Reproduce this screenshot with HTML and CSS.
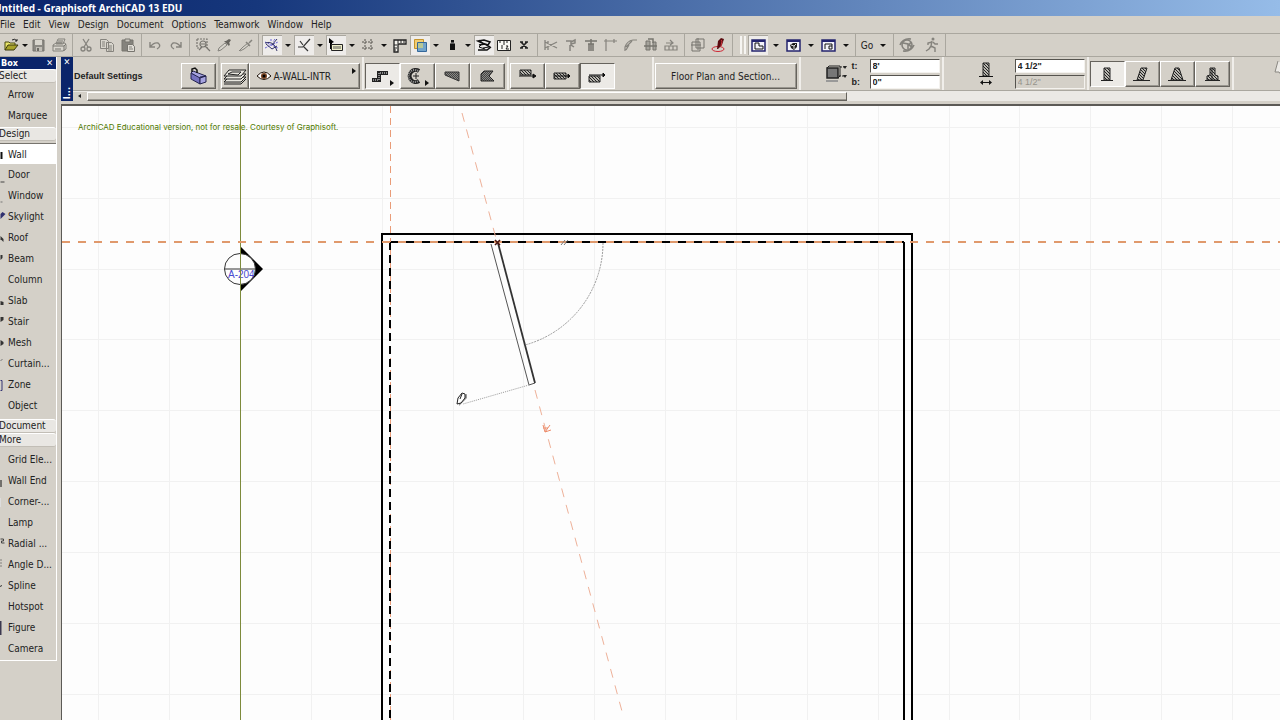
FILE: index.html
```html
<!DOCTYPE html>
<html lang="en">

<head>
    <meta charset="UTF-8">
    <meta name="viewport" content="width=device-width, initial-scale=1.0">
    <title>Untitled - Graphisoft ArchiCAD 13 EDU</title>
    <link rel="stylesheet" href="styles.css">
</head>

<body>
    <!-- shared hatch fills -->
    <svg class="defs" width="0" height="0" aria-hidden="true">
        <defs>
            <pattern id="hatch" width="3" height="3" patternUnits="userSpaceOnUse">
                <rect width="3" height="3" fill="#b8b6b0" />
                <path d="M0 0l3 3M-1 2l2 2M2-1l2 2" stroke="#222" />
            </pattern>
            <pattern id="dense" width="2" height="2" patternUnits="userSpaceOnUse">
                <rect width="2" height="2" fill="#8a8985" />
                <path d="M0 0h1v1h1v1h-1v-1h-1z" fill="#444" />
            </pattern>
        </defs>
    </svg>

    <header class="titlebar">
        <h1>Untitled - Graphisoft ArchiCAD 13 EDU</h1>
    </header>

    <nav class="menubar">
        <button>File</button>
        <button>Edit</button>
        <button>View</button>
        <button>Design</button>
        <button>Document</button>
        <button>Options</button>
        <button>Teamwork</button>
        <button>Window</button>
        <button>Help</button>
    </nav>

    <div class="toolbar">
        <div class="group">
            <button class="tool" aria-label="Open"><svg viewBox="0 0 20 18"><path d="M4 14V6h4l1 1h5v2" fill="#e8e46a" stroke="#4b4a10" /><path d="M4 14l3-5h10l-4 5z" fill="#a8a32a" stroke="#3a390c" /><path d="M11 4q3-2 5 1m0-2v2h-2" fill="none" stroke="#222" /></svg></button>
            <button class="arrow tight" aria-label="Open menu"></button>
            <button class="tool" aria-label="Save"><svg viewBox="0 0 20 18"><path d="M5 4h11v11H5z" fill="#8b8983" stroke="#77756f" /><path d="M7 4h7v5H7z" fill="#d8d5cd" /><path d="M8 11h6v4H8z" fill="#c0bdb5" /><path d="M9 12h2v3H9z" fill="#6b6963" /></svg></button>
            <button class="tool" aria-label="Print"><svg viewBox="0 0 20 18"><path d="M7 8l2-5h7l-2 5zM4 9l3-2h9l1 2v4l-3 2H4z" fill="#d8d5cd" stroke="#85837d" /><path d="M4 10h11v5M9 5h5M8 7h5M15 10l2-2M6 13h6" fill="none" stroke="#77756f" /></svg></button>
        </div>
        <div class="group">
            <button class="tool" aria-label="Cut"><svg viewBox="0 0 20 18"><g fill="none" stroke="#85837d" stroke-width="1.3"><path d="M7 3l5 8M13 3l-5 8" /><circle cx="7" cy="13" r="2" /><circle cx="13" cy="13" r="2" /></g></svg></button>
            <button class="tool" aria-label="Copy"><svg viewBox="0 0 20 18"><g fill="#d8d5cd" stroke="#85837d"><path d="M3.500 3.500h6l2 2v7h-8zM9.500 6.500h5l2 2v7h-7z" /><path d="M5 6h3M5 8h3M5 10h3M11 10h4M11 12h4M11 14h4" /></g></svg></button>
            <button class="tool" aria-label="Paste"><svg viewBox="0 0 20 18"><path d="M4 4h11v11H4z" fill="#85837d" stroke="#77756f" /><path d="M7 3h5v3H7z" fill="#c9c6be" stroke="#77756f" /><path d="M9.500 8.500h5l2 2v5h-7z" fill="#e0ddd6" stroke="#77756f" /><path d="M11 11h3M11 13h4" stroke="#85837d" /></svg></button>
        </div>
        <div class="group">
            <button class="tool" aria-label="Undo"><svg viewBox="0 0 20 18"><path d="M5 6v5h5M5 11q4-5 8-4q4 3-1 6" fill="none" stroke="#85837d" stroke-width="1.400" /></svg></button>
            <button class="tool" aria-label="Redo"><svg viewBox="0 0 20 18"><path d="M15 6v5h-5M15 11q-4-5-8-4q-4 3 1 6" fill="none" stroke="#85837d" stroke-width="1.400" /></svg></button>
        </div>
        <div class="group">
            <button class="tool" aria-label="Find and select"><svg viewBox="0 0 20 18"><g fill="none" stroke="#77756f" stroke-width="1.200"><path d="M4 3h10v9M4 3v9h4" stroke-dasharray="2 1" /><circle cx="10" cy="8" r="3" /><path d="M12 10l5 5M6 14l3-3M8 8h4" /></g></svg></button>
            <button class="tool" aria-label="Pick up parameters"><svg viewBox="0 0 20 18"><path d="M4 15l1-3 6-5 2 2-6 5z" fill="#d8d5cd" stroke="#85837d" /><path d="M10 5l5 5 1-2-1-1 2-3-2-1-3 2z" fill="#66645e" /></svg></button>
            <button class="tool" aria-label="Inject parameters"><svg viewBox="0 0 20 18"><path d="M4 15l4-4 5-4 1 2-5 4-4 2" fill="#d8d5cd" stroke="#85837d" /><path d="M11 6l4 4M14 7l3-3" stroke="#85837d" stroke-width="1.500" /></svg></button>
        </div>
        <div class="group packed">
            <button class="tool on" aria-label="Guide lines"><svg viewBox="0 0 20 18"><path d="M3 6l13 6M3 12l13-6M9 3v3M13 3l-2 3" stroke="#6a62d8" stroke-dasharray="2 1" /><path d="M3 7q9-3 12 8M10 9l5-6M4 8l6 5 5-3" fill="none" stroke="#333367" /></svg></button>
            <button class="arrow" aria-label="Guide line options"></button>
            <button class="tool on" aria-label="Snap points"><svg viewBox="0 0 20 18"><path d="M4 11h5l7-8M6 5l3 4M10 11l4 4" fill="none" stroke="#333" stroke-width="1.200" /></svg></button>
            <button class="arrow" aria-label="Snap options"></button>
            <button class="tool on" aria-label="Tracker"><svg viewBox="0 0 20 18"><path d="M3 2l5 4-2 1v6H4V7H3z" fill="#000" /><path d="M5.500 8.500h11v6h-11z" fill="#eeeec8" stroke="#222" /><path d="M8 10v3M10 10v3M12 10v3M14 10v3" stroke="#555" /></svg></button>
            <button class="arrow" aria-label="Tracker options"></button>
            <button class="tool" aria-label="Grid snap"><svg viewBox="0 0 20 18"><path d="M4 6h12M4 12h12M7 3v12M13 3v12" stroke="#55534d" stroke-dasharray="2 1" /></svg></button>
            <button class="arrow" aria-label="Grid options"></button>
            <button class="tool" aria-label="Rulers"><svg viewBox="0 0 20 18"><path d="M4 4h12v4H8v8H4z" fill="#f4f2ec" stroke="#222" stroke-width="1.300" /><path d="M8 4v3M11 4v3M14 4v3M4 9h3M4 12h3M4 14h2" stroke="#222" /></svg></button>
            <button class="tool on" aria-label="Trace reference"><svg viewBox="0 0 20 18"><path d="M4.500 3.500h9v9h-9z" fill="#f1cd72" stroke="#c5942c" /><path d="M7.500 6.500h9v9h-9z" fill="#73a4cb" stroke="#34689b" /><path d="M8 7h5v5H8z" fill="#b7c796" /></svg></button>
            <button class="arrow" aria-label="Trace options"></button>
            <button class="tool" aria-label="Pen weight"><svg viewBox="0 0 20 18"><path d="M9 4h3v3l1 1v6H8V8l1-1z" fill="#111" /><path d="M9 7h3" stroke="#aaa" /></svg></button>
            <button class="arrow" aria-label="Pen options"></button>
            <button class="tool on" aria-label="Suspend groups"><svg viewBox="0 0 20 18"><path d="M4 5l6-1 6 2-2 3-6-2zM5 9l6-1 5 3M4 14h9l4-3" fill="none" stroke="#111" stroke-width="1.500" /><path d="M5 4l5 4M8 8l-3 3 6 2M9 12l6-1" stroke="#111" fill="none" /></svg></button>
            <button class="tool" aria-label="Measure"><svg viewBox="0 0 20 18"><path d="M3.500 4.500h13v10h-13z" fill="#fafaf6" stroke="#222" /><path d="M10 4v5M6 4v3M13 4v3M8 9v4M12 10h2l-2 3h3" stroke="#222" fill="none" /></svg></button>
            <button class="tool" aria-label="Close tracking"><svg viewBox="0 0 20 18"><path d="M7 6l6 6M13 6l-6 6M6 6h3M11 6h3M6 12h3M11 12h3" stroke="#222" stroke-width="1.600" /></svg></button>
        </div>
        <div class="group packed">
            <button class="tool" aria-label="Split"><svg viewBox="0 0 20 18"><path d="M4 6l12 6M4 12l12-6M4 4v10M7 5v3M7 11v3" fill="none" stroke="#85837d" stroke-width="1.300" /></svg></button>
            <button class="tool" aria-label="Adjust"><svg viewBox="0 0 20 18"><path d="M5 5h5v4l3 2M10 6l4-2v3l-4 1M9 9v6" fill="none" stroke="#85837d" stroke-width="1.500" /></svg></button>
            <button class="tool" aria-label="Trim"><svg viewBox="0 0 20 18"><path d="M4 5h12M7 8h6M8 8v7M12 8v7M10 3v12" fill="none" stroke="#77756f" stroke-width="1.500" /></svg></button>
            <button class="tool" aria-label="Intersect"><svg viewBox="0 0 20 18"><path d="M5 15V5h11M5 3v2H3M13 3v4" fill="none" stroke="#85837d" stroke-width="1.200" /></svg></button>
            <button class="tool" aria-label="Fillet"><svg viewBox="0 0 20 18"><path d="M4 15V11q2-6 8-7h4M5 11l6-6M5 14l3-5" fill="none" stroke="#85837d" stroke-width="1.200" /></svg></button>
            <button class="tool" aria-label="Resize"><svg viewBox="0 0 20 18"><path d="M5 5h4v9H5zM12 6h3v8h-3z" fill="#a5a39c" stroke="#77756f" /><path d="M3 10h13M7 3h5v4" fill="none" stroke="#77756f" stroke-width="1.500" /></svg></button>
            <button class="tool" aria-label="Stretch"><svg viewBox="0 0 20 18"><path d="M4 10h12v4H4zM5 7h7M9 4l3 3-3 2M8 10v4M12 10v4" fill="none" stroke="#85837d" stroke-width="1.200" /></svg></button>
        </div>
        <div class="group last">
            <button class="tool" aria-label="Edit group"><svg viewBox="0 0 20 18"><path d="M4 6h8v9H4zM8 3h8v9H8zM3 9h10M10 2v12" fill="none" stroke="#77756f" /></svg></button>
            <button class="tool" aria-label="Markup"><svg viewBox="0 0 20 18"><ellipse cx="9" cy="13" rx="6" ry="2.500" fill="none" stroke="#cf2836" /><path d="M8 13l1-8 3-3 3 1-2 6-4 4z" fill="#5b0b10" /><path d="M12 4l1 1-1 5" stroke="#c6323a" fill="none" /></svg></button>
        </div>
        <div class="grip"></div>
        <div class="group views">
            <button class="tool on" aria-label="Floor plan"><svg viewBox="0 0 20 18"><path d="M4 4h13v11H4z" fill="#f3f3fa" stroke="#24246e" stroke-width="1.500" /><path d="M4 5h13" stroke="#24246e" stroke-width="2" /><path d="M7 7h4v3h4v3H7z" fill="none" stroke="#111" /></svg></button>
            <button class="arrow" aria-label="Floor plan list"></button>
            <button class="tool" aria-label="3D view"><svg viewBox="0 0 20 18"><path d="M4 4h13v11H4z" fill="#f3f3fa" stroke="#24246e" stroke-width="1.500" /><path d="M4 5h13" stroke="#24246e" stroke-width="2" /><path d="M7 9l3-2 4 0v4l-3 3-3-2z" fill="#222" /><path d="M8 9l3 1 2-2M11 10v3" stroke="#ddd" /></svg></button>
            <button class="arrow" aria-label="3D view list"></button>
            <button class="tool" aria-label="Section"><svg viewBox="0 0 20 18"><path d="M4 4h13v11H4z" fill="#f3f3fa" stroke="#24246e" stroke-width="1.500" /><path d="M4 5h13" stroke="#24246e" stroke-width="2" /><path d="M7 8h7v5h-3v-3h3M7 8v5" fill="none" stroke="#111" /></svg></button>
            <button class="arrow" aria-label="Section list"></button>
        </div>
        <div class="group">
            <button class="go">Go</button>
            <button class="arrow" aria-label="Go list"></button>
        </div>
        <div class="group walk last">
            <button class="tool" aria-label="Orbit"><svg viewBox="0 0 20 18"><g fill="none" stroke="#85837d" stroke-width="1.600"><circle cx="10" cy="9" r="5" /><path d="M3 9q3-7 11-6M17 9q-3 7-11 6M6 7l5 1v5M14 6l-2 3 3 2" /></g></svg></button>
            <button class="tool" aria-label="Walk"><svg viewBox="0 0 20 18"><circle cx="11" cy="3" r="1.500" fill="#85837d" /><path d="M10 5l-1 5 4 2v4M9 10l-2 3-3 2M10 6l-4 1v2M11 6l2 2h3" fill="none" stroke="#85837d" stroke-width="1.400" /></svg></button>
        </div>
    </div>

    <main class="workspace">
        <aside class="toolbox">
            <div class="toolbox-title"><span>Box</span><button aria-label="Close toolbox">✕</button></div>
            <h2>Select</h2>
            <ul>
                <li><button>Arrow</button></li>
                <li><button>Marquee</button></li>
            </ul>
            <h2>Design</h2>
            <ul class="design">
                <li class="active"><svg viewBox="0 0 7 16"><path d="M0 6h2v7H0z" fill="#111" /></svg><button>Wall</button></li>
                <li><svg viewBox="0 0 7 16"><path d="M0 15h4" stroke="#444" /></svg><button>Door</button></li>
                <li><svg viewBox="0 0 7 16"><path d="M0 14h2" stroke="#777" /></svg><button>Window</button></li>
                <li><svg viewBox="0 0 7 16"><path d="M0 5l2-2 3 2-5 5z" fill="#30306f" /></svg><button>Skylight</button></li>
                <li><svg viewBox="0 0 7 16"><path d="M0 6l3 3v3l-2-2H0z" fill="#333" /></svg><button>Roof</button></li>
                <li><svg viewBox="0 0 7 16"><path d="M0 4h2v3l-2 2z" fill="#333" /></svg><button>Beam</button></li>
                <li><button>Column</button></li>
                <li><svg viewBox="0 0 7 16"><path d="M0 8l3 1v3H0z" fill="#333" /></svg><button>Slab</button></li>
                <li><svg viewBox="0 0 7 16"><path d="M0 3h3v3L0 8z" fill="#333" /></svg><button>Stair</button></li>
                <li><svg viewBox="0 0 7 16"><path d="M0 5l3 2v2l-3 2z" fill="#333" /></svg><button>Mesh</button></li>
                <li><svg viewBox="0 0 7 16"><path d="M0 5l2-2" stroke="#777" /></svg><button>Curtain...</button></li>
                <li><svg viewBox="0 0 7 16"><path d="M0 3.500h1.500v10H0" fill="none" stroke="#343474" /></svg><button>Zone</button></li>
                <li><button>Object</button></li>
            </ul>
            <h2>Document</h2>
            <h2>More</h2>
            <ul class="more">
                <li><button>Grid Ele...</button></li>
                <li><svg viewBox="0 0 7 16"><path d="M0 7h1v7H0z" fill="#111" /></svg><button>Wall End</button></li>
                <li><svg viewBox="0 0 7 16"><path d="M0 4v9" stroke="#ddd" /></svg><button>Corner-...</button></li>
                <li><button>Lamp</button></li>
                <li><svg viewBox="0 0 7 16"><path d="M0 3h3v2H1v2h3" fill="none" stroke="#444" /></svg><button>Radial ...</button></li>
                <li><svg viewBox="0 0 7 16"><path d="M0 3h1M0 6h1M0 9h1" stroke="#333" /></svg><button>Angle D...</button></li>
                <li><svg viewBox="0 0 7 16"><path d="M0 9l1-2" stroke="#333" /></svg><button>Spline</button></li>
                <li><button>Hotspot</button></li>
                <li><svg viewBox="0 0 7 16"><path d="M0 1v14" stroke="#3c3950" stroke-width="2" /></svg><button>Figure</button></li>
                <li><button>Camera</button></li>
            </ul>
        </aside>

        <section class="content">
            <div class="infobox">
                <div class="infobox-handle"><button aria-label="Close info box">✕</button><span>I...</span></div>
                <div class="infobox-main">
                    <div class="settings">
                        <div class="cell default">
                            <strong>Default Settings</strong>
                            <button class="btn" aria-label="Wall settings"><svg viewBox="0 0 20 20"><path d="M3 7l9 4v7L3 13z" fill="#7672c0" stroke="#23234e" /><path d="M3 7l2-2 13 5-6 2zM12 11l6-1v6l-6 2z" fill="#a6a3df" stroke="#23234e" /><path d="M4 6V3l3-1 2 2v3" fill="none" stroke="#111" stroke-width="1.500" /></svg></button>
                        </div>
                        <div class="cell layer">
                            <button class="btn layers" aria-label="Layers"><svg viewBox="0 0 24 20"><g fill="#e8e6df" stroke="#222"><path d="M1 16l5-5h17l-5 5z" /><path d="M1 13l5-5h17l-5 5z" /><path d="M1 10l5-6h17l-5 6z" /><path d="M5 8l4-2h9l-3 3zM1 18h17l5-5" fill="none" /></g></svg></button>
                            <button class="btn layer-name"><svg viewBox="0 0 16 12"><path d="M1 6q7-8 14 0q-7 7-14 0z" fill="#fff" stroke="#20140a" /><circle cx="8" cy="6" r="3" fill="#7a4522" /><circle cx="8" cy="6" r="1.500" fill="#000" /></svg><span>A-WALL-INTR</span><i class="more-arrow"></i></button>
                        </div>
                        <div class="cell">
                            <button class="btn on" aria-label="Chained wall"><svg viewBox="0 0 20 20"><path d="M2 14h7V7h9" fill="none" stroke="#222" stroke-width="4" /><path d="M3 14h6V7h8" fill="none" stroke="#888" stroke-width="2" stroke-dasharray="1 1" /></svg><i class="more-arrow low"></i></button>
                            <button class="btn" aria-label="Curved wall"><svg viewBox="0 0 20 20"><path d="M14 5a6 6 0 1 0 0 10" fill="none" stroke="#222" stroke-width="4" /><path d="M13 5a6 6 0 1 0 0 10" fill="none" stroke="#999" stroke-width="2" stroke-dasharray="1 1" /><path d="M8 10h6M11 7v6" stroke="#222" /></svg><i class="more-arrow low"></i></button>
                            <button class="btn" aria-label="Trapezoid wall"><svg viewBox="0 0 20 20"><path d="M3 6h14v9L3 9z" fill="url(#dense)" stroke="#333" /></svg></button>
                            <button class="btn" aria-label="Polygonal wall"><svg viewBox="0 0 20 20"><path d="M4 8l3-3h9l-4 5 5 5H4z" fill="url(#dense)" stroke="#222" /></svg></button>
                        </div>
                        <div class="cell reference">
                            <button class="btn" aria-label="Reference line outside"><svg viewBox="0 0 20 20"><path d="M3 4h11v5H3z" fill="url(#hatch)" stroke="#222" /><path d="M2 10h15M16 8l3 2-3 2z" fill="#111" stroke="#111" /></svg></button>
                            <button class="btn" aria-label="Reference line center"><svg viewBox="0 0 20 20"><path d="M2 7h12v6H2z" fill="url(#hatch)" stroke="#222" /><path d="M2 10h15M16 8l2 2-2 2z" fill="#111" stroke="#111" /></svg></button>
                            <button class="btn on" aria-label="Reference line inside"><svg viewBox="0 0 20 20"><path d="M2 10h11v6H2z" fill="url(#hatch)" stroke="#222" /><path d="M2 9h15M16 7l2 2-2 2z" fill="#111" stroke="#111" /></svg></button>
                        </div>
                        <div class="cell">
                            <button class="btn wide">Floor Plan and Section...</button>
                        </div>
                        <div class="cell heights">
                            <svg class="height-icon" viewBox="0 0 24 20"><path d="M3 4h11v10H3z" fill="#777" stroke="#222" stroke-width="1.500" /><path d="M3 4l2-2h11v10l-2 2" fill="none" stroke="#222" /><path d="M16 3h6M15 12h6" stroke="#222" stroke-dasharray="2 1" /><path d="M19 2h4l-2 3zM19 11h4l-2 3z" fill="#222" /><path d="M2 17h12" stroke="#999" stroke-width="2" /></svg>
                            <div class="fields">
                                <label><span>t:</span><input type="text" value="8'"></label>
                                <label><span>b:</span><input type="text" value='0"'></label>
                            </div>
                        </div>
                        <div class="cell thickness">
                            <svg class="thick-icon" viewBox="0 0 14 24"><path d="M4 1h6v13H4z" fill="url(#hatch)" stroke="#222" /><path d="M0 14.500h14M2 20.500h10" stroke="#111" /><path d="M4 18l-3 2.500 3 2.500zM10 18l3 2.500-3 2.500z" fill="#111" /></svg>
                            <div class="fields">
                                <input type="text" value='4 1/2"' aria-label="Wall thickness">
                                <input type="text" value='4 1/2"' aria-label="Second thickness" disabled>
                            </div>
                        </div>
                        <div class="cell profile">
                            <button class="btn on" aria-label="Straight"><svg viewBox="0 0 20 20"><path d="M7 4h6v12H7z" fill="url(#hatch)" stroke="#222" /><path d="M4 16.500h12" stroke="#222" /></svg></button>
                            <button class="btn" aria-label="Slanted"><svg viewBox="0 0 20 20"><path d="M9 4h6l-4 12H5z" fill="url(#hatch)" stroke="#222" /><path d="M1 16.500h17" stroke="#222" /></svg></button>
                            <button class="btn" aria-label="Double slanted"><svg viewBox="0 0 20 20"><path d="M8 4h4l4 12H4z" fill="url(#hatch)" stroke="#222" /><path d="M1 16.500h18" stroke="#222" /></svg></button>
                            <button class="btn" aria-label="Complex profile"><svg viewBox="0 0 20 20"><path d="M8 4h5v7l3 1v4H5v-4l3-1z" fill="url(#hatch)" stroke="#222" /><path d="M3 16.500h15M10 4v12" stroke="#222" /></svg></button>
                        </div>
                        <svg class="next-icon" viewBox="0 0 20 20"><path d="M4 2L1 13h4l3 4 2-4h9" fill="#eceae6" stroke="#8a8882" /></svg>
                    </div>
                    <div class="scroll">
                        <span class="scroll-left"></span>
                        <span class="scroll-thumb"></span>
                    </div>
                </div>
            </div>

            <svg class="plan" viewBox="62 106 1218 614" preserveAspectRatio="xMinYMin slice">
                <!-- grid -->
                <path class="grid" d="M98.500 106v614M169.500 106v614M311.500 106v614M382.500 106v614M453.500 106v614M523.500 106v614M594.500 106v614M665.500 106v614M736.500 106v614M807.500 106v614M878.500 106v614M949.500 106v614M1019.500 106v614M1090.500 106v614M1161.500 106v614M1232.500 106v614M62 127.500h1218M62 198.500h1218M62 269.500h1218M62 339.500h1218M62 410.500h1218M62 481.500h1218M62 552.500h1218M62 623.500h1218M62 694.500h1218" />
                <text class="edu" x="78" y="130">ArchiCAD Educational version, not for resale. Courtesy of Graphisoft.</text>

                <!-- section marker -->
                <path d="M241 247l22 22-22 22z" fill="#000" />
                <circle cx="240" cy="269" r="15.500" fill="#fdfdfd" stroke="#333" />
                <path d="M225 269h31" stroke="#333" />
                <text class="marker" x="228" y="278">A-204</text>
                <path d="M240.500 106v614" stroke="#7d8a3c" />

                <!-- guide lines under the room -->
                <path d="M390.500 106v614" stroke="#e99c78" stroke-dasharray="7 5" />

                <!-- room -->
                <path d="M382 720V234h530v486M904 720V242" fill="none" stroke="#000" stroke-width="2" />
                <path d="M391 242h513" stroke="#000" stroke-width="2" />
                <path d="M390 242v478" stroke="#000" stroke-width="2" stroke-dasharray="8 5" />

                <!-- guide lines -->
                <path d="M62 242h1218" stroke="#e0996c" stroke-width="2" stroke-dasharray="8 8" />
                <path d="M462 113l35 129M535 390l88 325" stroke="#eeb199" stroke-dasharray="9 8" />
                <path d="M543 425l2 7 5-7M545 432l6-2M543 428h5" fill="none" stroke="#ed8c6b" />

                <!-- wall being drawn -->
                <path d="M491 244l38 141 6-2" fill="none" stroke="#555" />
                <path d="M498 243l37 140" stroke="#333" stroke-width="1.800" />
                <path d="M603 243a106 106 0 0 1-78 102" fill="none" stroke="#999" stroke-dasharray="2 1" />
                <path d="M529 385l-66 19" stroke="#999" stroke-dasharray="1 1" />
                <path d="M495 240l5 5M500 240l-5 5" stroke="#4a1712" stroke-width="1.600" />
                <path d="M561 245l4-5M564 245l4-5" stroke="#777" />
                <path d="M459 406l8-8v-4l-3 1-5 9z" fill="#999" />
                <path d="M457 404l1-6 4-5 3 1v4l-4 5zM462 394l-2 5" fill="#fff" stroke="#222" />
            </svg>
        </section>
    </main>
</body>

</html>
```

FILE: styles.css
```css
* {
    box-sizing: border-box;
}

html,
body {
    height: 100%;
    margin: 0;
    padding: 0;
}

body {
    display: flex;
    flex-direction: column;
    overflow: hidden;
    background-color: #d4d0c8;
    color: #222;
    font-family: "DejaVu Sans Condensed", "DejaVu Sans", sans-serif;
    font-size: 10px;
}

button,
input {
    margin: 0;
    padding: 0;
    border: none;
    background: none;
    color: inherit;
    font: inherit;
}

.defs {
    position: absolute;
}

/* title and menu */
.titlebar {
    flex: none;
    height: 16px;
    overflow: hidden;
    background: linear-gradient(90deg, #0a246a, #16377c 20%, #96bce8);
}

.titlebar h1 {
    margin: 0 0 0 -6px;
    color: #fff;
    font-family: "Noto Sans", sans-serif;
    font-size: 10px;
    line-height: 16px;
}

.menubar {
    display: flex;
    flex: none;
    gap: 8px;
    height: 17px;
}

/* main toolbar */
.toolbar {
    display: flex;
    flex: none;
    height: 24px;
    margin-left: -2px;
    border-top: 1px solid #aaa79f;
    border-bottom: 1px solid #aaa79f;
}

.group {
    display: flex;
    gap: 1px;
    align-items: center;
    padding: 0 3px;
    border-right: 1px solid #aaa79f;
}

.group.packed {
    gap: 0;
}

.tool {
    width: 20px;
    height: 20px;
}

.tool svg {
    display: block;
    width: 20px;
    height: 18px;
}

.tool.on {
    background-color: #eeecea;
    box-shadow: inset 1px 1px #aaa79f;
}

.arrow {
    display: flex;
    justify-content: center;
    width: 12px;
}

.arrow::after {
    content: "";
    border: 3px solid transparent;
    border-top: 3px solid #111;
    border-bottom: 0;
}

.arrow.tight {
    width: 5px;
}

.grip {
    width: 6px;
    margin: 2px 0 2px 7px;
    border-left: 2px solid #f6f5f2;
    border-right: 2px solid #f6f5f2;
}

.views {
    gap: 0;
    padding: 0 2px;
}

.views .arrow {
    width: 15px;
}

.go {
    width: 16px;
}

.group .go+.arrow {
    width: 14px;
}

.walk {
    gap: 5px;
}

/* workspace */
.workspace {
    display: flex;
    flex: 1;
    min-height: 0;
}

.toolbox {
    flex: none;
    align-self: flex-start;
    width: 57px;
    border-right: 1px solid #fff;
    border-bottom: 1px solid #fff;
}

.toolbox-title {
    display: flex;
    justify-content: space-between;
    height: 12px;
    padding: 0 3px 0 1px;
    background-color: #0a246a;
    color: #fff;
    font-size: 9px;
    font-weight: bold;
    line-height: 12px;
}

.toolbox h2 {
    height: 14px;
    margin: 0 0 0 -1px;
    border-top: 1px solid #fff;
    border-bottom: 1px solid #c2beb6;
    border-radius: 0 3px 3px 0;
    background-color: #e9e7e3;
    font-size: 10px;
    font-weight: normal;
    line-height: 12px;
}

.toolbox ul {
    margin: 0;
    padding: 1px 0;
    list-style: none;
}

.toolbox .design {
    padding: 2px 0 3px;
}

.toolbox .more {
    padding: 2px 0 1px;
}

.toolbox li {
    display: flex;
    justify-content: flex-end;
    align-items: center;
    height: 21px;
}

.toolbox li svg {
    width: 8px;
    height: 16px;
}

.toolbox li button {
    width: 48px;
    text-align: left;
    white-space: nowrap;
}

.toolbox .active {
    border-top: 1px solid #77746e;
    background-color: #fff;
}

.content {
    display: flex;
    flex: 1;
    flex-direction: column;
    min-width: 0;
    margin-left: 4px;
}

/* info box */
.infobox {
    display: flex;
    flex: none;
    height: 44px;
    margin-bottom: 3px;
}

.infobox-handle {
    display: flex;
    flex: none;
    flex-direction: column;
    align-items: center;
    justify-content: space-between;
    width: 12px;
    padding-bottom: 2px;
    background-color: #0a246a;
    color: #fff;
    font-size: 9px;
    font-weight: bold;
}

.infobox-handle span {
    line-height: 12px;
    writing-mode: vertical-rl;
    transform: rotate(180deg);
}

.infobox-main {
    flex: 1;
    min-width: 0;
}

.settings {
    display: flex;
    height: 34px;
    overflow: hidden;
    border-bottom: 1px solid #aaa79f;
}

.cell {
    display: flex;
    flex: none;
    align-items: center;
    padding: 5px 2px 0 1px;
    border-right: 2px solid #f0eeea;
}

.default {
    gap: 38px;
    border-right-color: #bbb8b0;
}

.default strong {
    font-family: "Liberation Sans", sans-serif;
    font-size: 9px;
}

.btn {
    display: flex;
    align-items: center;
    justify-content: center;
    width: 35px;
    height: 26px;
    border: 1px solid;
    border-color: #fff #66635d #66635d #fff;
    box-shadow: inset -1px -1px #99968f;
}

.btn svg {
    flex: none;
    width: 20px;
    height: 20px;
}

.btn.on {
    border-color: #66635d #fff #fff #66635d;
    background-color: #eceae6;
    box-shadow: none;
}

.btn.layers {
    width: 28px;
}

.btn.layers svg {
    width: 24px;
}

.btn.layer-name {
    justify-content: flex-start;
    gap: 2px;
    width: 111px;
    padding-left: 6px;
}

.btn.layer-name svg {
    width: 16px;
    height: 12px;
}

.btn.wide {
    width: 142px;
}

.more-arrow {
    align-self: flex-start;
    margin: 4px 3px 0 auto;
    border: 3px solid transparent;
    border-left: 4px solid #111;
    border-right: 0;
}

.more-arrow.low {
    align-self: flex-end;
    margin: 0 0 2px;
}

.reference {
    padding-right: 37px;
}

.fields {
    display: flex;
    flex-direction: column;
    gap: 2px;
}

.fields label {
    display: flex;
    align-items: center;
}

.fields label span {
    width: 18px;
    font-family: "Liberation Sans", sans-serif;
    font-size: 9px;
    font-weight: bold;
}

.fields input {
    width: 70px;
    height: 14px;
    padding-left: 2px;
    border: 1px solid;
    border-color: #55534e #f4f2ee #f4f2ee #55534e;
    background-color: #fff;
    font-family: "Liberation Sans", sans-serif;
    font-size: 9px;
    font-weight: bold;
}

.fields input:disabled {
    background-color: #d4d0c8;
    color: #96938c;
    font-weight: normal;
}

.heights,
.thickness {
    padding-top: 0;
}

.heights {
    gap: 4px;
    padding-left: 23px;
}

.height-icon {
    width: 24px;
    height: 20px;
}

.thickness {
    gap: 22px;
    padding-left: 35px;
}

.thick-icon {
    width: 14px;
    height: 24px;
}

.profile {
    padding-top: 0;
}

.next-icon {
    flex: none;
    width: 20px;
    height: 20px;
    margin: 2px 0 0 40px;
}

.scroll {
    display: flex;
    height: 10px;
    padding-top: 1px;
    background-color: #ebe9e5;
}

.scroll-left {
    width: 14px;
    background-color: #d4d0c8;
}

.scroll-left::after {
    content: "";
    display: block;
    width: 0;
    margin: 2px 5px;
    border: 2px solid transparent;
    border-right: 3px solid #222;
    border-left: 0;
}

.scroll-thumb {
    width: 63%;
    border: 1px solid;
    border-color: #fff #66635d #66635d #fff;
    background-color: #d4d0c8;
    box-shadow: inset 0 -1px #99968f;
}

/* drawing area */
.plan {
    display: block;
    flex: 1;
    width: 100%;
    min-height: 0;
    border-top: 2px solid #5c5a56;
    border-left: 1px solid #5c5a56;
    background-color: #fdfdfd;
}

.grid {
    fill: none;
    stroke: #f1f1f1;
}

.edu {
    fill: #4f7a00;
    font-family: Inter, "DejaVu Sans", sans-serif;
    font-size: 8px;
}

.marker {
    fill: #4a4ad0;
    font-family: "Liberation Sans", sans-serif;
    font-size: 10px;
}
```
